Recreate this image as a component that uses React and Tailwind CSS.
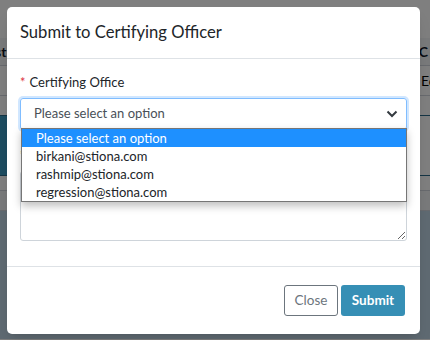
import React from 'react';

const options = [
  'Please select an option',
  'birkani@stiona.com',
  'rashmip@stiona.com',
  'regression@stiona.com',
];

const Background = () => (
  <div className="h-[340px] w-[430px] bg-white text-[14px]">
    <div className="h-[38px]"></div>
    <div className="flex h-[28px] items-center justify-between border-b border-gray-300 bg-gray-100 font-bold text-gray-900">
      <span className="-ml-[5px]">st</span>
      <span className="mr-[2px]">C</span>
    </div>
    <div className="flex h-[30px] items-center border-b border-gray-300 pl-[421px]">
      <span>Ed</span>
    </div>
    <div className="h-[20px] border-b border-[#2a6a8a]"></div>
    <div className="h-[60px] border-b border-[#2a6a8a]">
      <div className="h-full w-[8px] bg-[#3b98c0]"></div>
    </div>
    <div className="h-[15px] border-b border-gray-300"></div>
    <div className="h-[20px] border-b border-gray-300 bg-gray-100"></div>
    <div className="h-[128px] bg-[#bfd5e4]"></div>
  </div>
);

export default function App() {
  return (
    <div className="relative h-[340px] w-[430px] overflow-hidden" style={{ fontFamily: 'Lato, "Noto Sans", sans-serif' }}>
      <Background />
      <div className="absolute inset-0 bg-black/50"></div>

      <div className="absolute left-[7px] top-[7px] flex h-[327px] w-[413px] flex-col rounded-[5px] bg-white shadow-lg">
        <div className="flex h-[52px] items-center border-b border-[#dee2e6] px-[13px]">
          <h2 className="text-[16.6px] text-[#212529]">Submit to Certifying Officer</h2>
        </div>

        <div className="relative flex-1 px-[13px] pt-[14px]">
          <label className="block h-[19px] text-[13px] leading-[19px] text-[#212529]">
            <span className="mr-[4px] text-[#dc3545]">*</span>Certifying Office
          </label>
          <div className="mt-[6px] flex h-[32px] items-center justify-between rounded-[3px] border border-[#80bdff] px-[13px] text-[13px] text-[#495057] shadow-[0_0_0_2px_rgba(0,123,255,0.18)]">
            <span>Please select an option</span>
            <svg width="12" height="8" viewBox="0 0 12 8" className="mr-[-5px]">
              <path d="M1.5 1.5 L6 6 L10.5 1.5" fill="none" stroke="#343a40" strokeWidth="2" />
            </svg>
          </div>

          <div className="mt-[16px] h-[19px] text-[13px] leading-[19px] text-[#fd7e14]">*</div>
          <textarea className="mt-[6px] block h-[70px] w-full rounded-[3px] border border-[#ced4da]"></textarea>

          <ul className="absolute left-[14px] right-[13px] top-[69px] border border-[#767676] bg-white text-[13px] leading-[18px] text-[#212529] shadow-[0_4px_8px_rgba(0,0,0,0.25)]">
            {options.map((opt, i) => (
              <li key={opt} className={`pl-[14px] ${i === 0 ? 'bg-[#1e90ff] text-white' : ''}`}>{opt}</li>
            ))}
          </ul>
        </div>

        <div className="flex h-[68px] items-center justify-end gap-[3px] border-t border-[#dee2e6] px-[15px]">
          <button className="h-[31px] w-[54px] rounded-[3px] border border-[#6c757d] text-[13.5px] text-[#6c757d]">Close</button>
          <button className="h-[31px] w-[64px] rounded-[3px] bg-[#368fb5] text-[13.5px] font-bold text-white">Submit</button>
        </div>
      </div>
    </div>
  );
}
